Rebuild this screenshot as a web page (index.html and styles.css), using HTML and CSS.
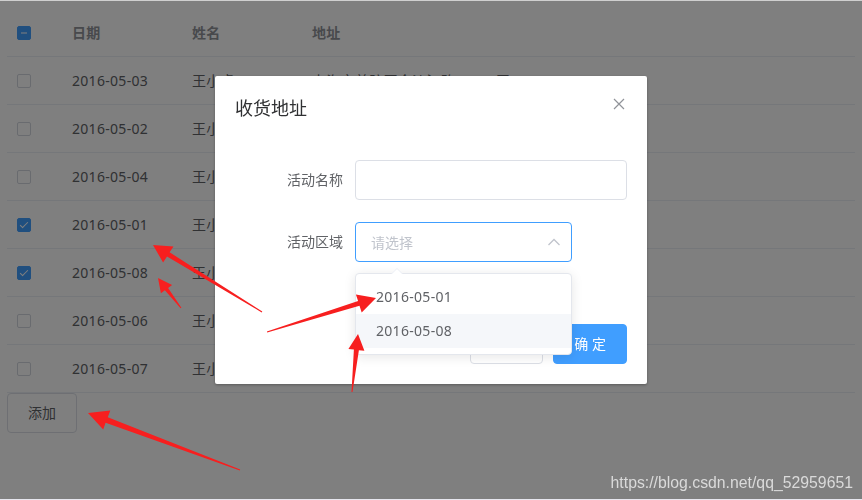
FILE: index.html
```html
<!DOCTYPE html>
<html lang="zh-CN">

<head>
  <meta charset="UTF-8">
  <meta name="viewport" content="width=device-width, initial-scale=1.0">
  <title>收货地址</title>
  <link rel="stylesheet" href="styles.css">
</head>

<body>
  <!-- 截图上下边缘 -->
  <div class="edge edge-top"></div>
  <div class="edge edge-bottom"></div>

  <div class="container">
    <!-- 表格 -->
    <div class="table">
      <div class="table-row table-head">
        <div class="cell cell-selection"><span class="checkbox indeterminate"></span></div>
        <div class="cell">日期</div>
        <div class="cell">姓名</div>
        <div class="cell">地址</div>
      </div>
      <div class="table-row">
        <div class="cell cell-selection"><span class="checkbox"></span></div>
        <div class="cell">2016-05-03</div>
        <div class="cell">王小虎</div>
        <div class="cell">上海市普陀区金沙江路 1518 弄</div>
      </div>
      <div class="table-row">
        <div class="cell cell-selection"><span class="checkbox"></span></div>
        <div class="cell">2016-05-02</div>
        <div class="cell">王小虎</div>
        <div class="cell">上海市普陀区金沙江路 1518 弄</div>
      </div>
      <div class="table-row">
        <div class="cell cell-selection"><span class="checkbox"></span></div>
        <div class="cell">2016-05-04</div>
        <div class="cell">王小虎</div>
        <div class="cell">上海市普陀区金沙江路 1518 弄</div>
      </div>
      <div class="table-row">
        <div class="cell cell-selection"><span class="checkbox checked"></span></div>
        <div class="cell">2016-05-01</div>
        <div class="cell">王小虎</div>
        <div class="cell">上海市普陀区金沙江路 1518 弄</div>
      </div>
      <div class="table-row">
        <div class="cell cell-selection"><span class="checkbox checked"></span></div>
        <div class="cell">2016-05-08</div>
        <div class="cell">王小虎</div>
        <div class="cell">上海市普陀区金沙江路 1518 弄</div>
      </div>
      <div class="table-row">
        <div class="cell cell-selection"><span class="checkbox"></span></div>
        <div class="cell">2016-05-06</div>
        <div class="cell">王小虎</div>
        <div class="cell">上海市普陀区金沙江路 1518 弄</div>
      </div>
      <div class="table-row">
        <div class="cell cell-selection"><span class="checkbox"></span></div>
        <div class="cell">2016-05-07</div>
        <div class="cell">王小虎</div>
        <div class="cell">上海市普陀区金沙江路 1518 弄</div>
      </div>
    </div>
    <!-- 添加按钮 -->
    <button class="btn">添加</button>
  </div>

  <!-- 遮罩 + 弹窗 -->
  <div class="dialog-wrapper">
    <div class="dialog">
      <div class="dialog-header">
        <span class="dialog-title">收货地址</span>
        <svg class="dialog-close" width="16" height="16" viewBox="0 0 16 16">
          <path d="M3 3L13 13M13 3L3 13" stroke="#909399" stroke-width="1.2" fill="none" />
        </svg>
      </div>

      <div class="dialog-body">
        <div class="form-item">
          <label class="form-label">活动名称</label>
          <div class="input"></div>
        </div>
        <div class="form-item">
          <label class="form-label">活动区域</label>
          <div class="select">
            <span class="placeholder">请选择</span>
            <svg class="select-arrow" width="14" height="14" viewBox="0 0 14 14">
              <polyline points="1.5,10 7,4.5 12.5,10" stroke="#C0C4CC" stroke-width="1.3" fill="none" />
            </svg>
            <!-- 下拉框 -->
            <div class="dropdown">
              <ul class="dropdown-list">
                <li class="dropdown-item">2016-05-01</li>
                <li class="dropdown-item hover">2016-05-08</li>
              </ul>
            </div>
          </div>
        </div>
      </div>

      <div class="dialog-footer">
        <button class="btn">取 消</button>
        <button class="btn btn-primary">确 定</button>
      </div>
    </div>
  </div>

  <!-- 截图标注箭头 -->
  <svg class="marks" width="862" height="500" viewBox="0 0 862 500">
    <g fill="#F71F1F">
      <polygon points="262.3,311.6 169.6,252.3 173.5,246.4 153,245 163.1,262.6 167,256.5 261.7,312.4" />
      <polygon points="181.4,307.7 168.1,287.9 172.1,284.9 158,278 160.9,293.3 164.9,290.3 180.6,308.3" />
      <polygon points="267.2,332.5 359.5,305.8 361.7,312.4 376,298 355.9,294.4 358.1,301 266.9,331.5" />
      <polygon points="352.5,392 358.9,350.2 364.4,350.7 358,334 348.4,349.1 353.9,349.6 351.5,392" />
      <polygon points="240.2,469.5 107.8,417.2 110.3,410.6 88,413 103.2,429.4 105.6,422.8 239.8,470.5" />
    </g>
  </svg>

  <!-- 水印 -->
  <div class="watermark">https://blog.csdn.net/qq_52959651</div>
</body>

</html>
```

FILE: styles.css
```css
/* 全局重置 */
* {
  margin: 0;
  padding: 0;
  box-sizing: border-box;
}

body {
  font-family: "Noto Sans", "Noto Sans CJK SC", sans-serif;
  font-size: 14px;
  color: #606266;
  background: #FFFFFF;
}

/* 截图边缘细线 */
.edge {
  position: fixed;
  left: 0;
  right: 0;
  height: 1px;
  z-index: 30;
}

.edge-top {
  top: 0;
  background: #CFCFCF;
}

.edge-bottom {
  bottom: 0;
  background: #E6E6EE;
}

.container {
  padding: 9px 7px 0;
}

/* 表格 */
.table-row {
  display: grid;
  grid-template-columns: 55px 120px 120px 1fr;
  align-items: center;
  height: 48px;
  border-bottom: 1px solid #EBEEF5;
}

.cell {
  padding-left: 10px;
  line-height: 23px;
  white-space: nowrap;
  letter-spacing: 0.3px;
}

.cell-selection {
  display: flex;
  align-items: center;
}

.table-head .cell {
  color: #909399;
  font-weight: bold;
}

/* 复选框 */
.checkbox {
  position: relative;
  width: 14px;
  height: 14px;
  border: 1px solid #D3D6DE;
  border-radius: 2px;
  background: #FFF;
}

.checkbox.checked,
.checkbox.indeterminate {
  background: #409EFF;
  border-color: #409EFF;
}

.checkbox.checked::after {
  content: "";
  position: absolute;
  left: 4px;
  top: 1px;
  width: 3px;
  height: 7px;
  border: 1px solid #FFF;
  border-left: 0;
  border-top: 0;
  transform: rotate(45deg);
}

.checkbox.indeterminate::before {
  content: "";
  position: absolute;
  left: 0;
  right: 0;
  top: 5px;
  height: 2px;
  background: #FFF;
  transform: scale(0.5);
}

/* 按钮 */
.btn {
  display: inline-block;
  padding: 12px 20px;
  border: 1px solid #DCDFE6;
  border-radius: 4px;
  background: #FFF;
  color: #606266;
  font-family: inherit;
  font-size: 14px;
  line-height: 14px;
}

.btn-primary {
  background: #409EFF;
  border-color: #409EFF;
  color: #FFF;
}

/* 遮罩层 */
.dialog-wrapper {
  position: fixed;
  top: 1px;
  left: 0;
  right: 0;
  bottom: 1px;
  background: rgba(0, 0, 0, 0.5);
  z-index: 10;
}

/* 弹窗 */
.dialog {
  position: relative;
  width: 432px;
  margin: 75px auto 0;
  background: #FFF;
  border-radius: 2px;
  box-shadow: 0 1px 3px rgba(0, 0, 0, 0.3);
}

.dialog-header {
  display: flex;
  justify-content: space-between;
  padding: 20px 20px 10px;
}

.dialog-title {
  font-size: 18px;
  line-height: 24px;
  color: #303133;
}

.dialog-body {
  padding: 30px 20px;
}

.form-item {
  display: flex;
  margin-bottom: 22px;
}

.form-label {
  width: 120px;
  padding-right: 12px;
  text-align: right;
  line-height: 40px;
}

.input {
  flex: 1;
  height: 40px;
  border: 1px solid #DCDFE6;
  border-radius: 4px;
}

/* 下拉选择 */
.select {
  position: relative;
  display: flex;
  align-items: center;
  justify-content: space-between;
  width: 217px;
  height: 40px;
  padding: 0 10px 0 15px;
  border: 1px solid #409EFF;
  border-radius: 4px;
}

.placeholder {
  color: #C0C4CC;
}

.dropdown {
  position: absolute;
  top: calc(100% + 12px);
  left: -1px;
  width: 217px;
  border: 1px solid #E4E7ED;
  border-radius: 4px;
  background: #FFF;
  box-shadow: 0 2px 12px rgba(0, 0, 0, 0.1);
  z-index: 5;
}

/* 下拉框小三角 */
.dropdown::before,
.dropdown::after {
  content: "";
  position: absolute;
  left: 35px;
  border: 6px solid transparent;
  border-top-width: 0;
}

.dropdown::before {
  top: -6px;
  border-bottom-color: #EBEEF5;
}

.dropdown::after {
  top: -5px;
  border-bottom-color: #FFF;
}

.dropdown-list {
  list-style: none;
  padding: 6px 0;
}

.dropdown-item {
  height: 34px;
  line-height: 34px;
  padding: 0 20px;
  color: #606266;
  letter-spacing: 0.3px;
}

.dropdown-item.hover {
  background: #F5F7FA;
}

/* 底部按钮 */
.dialog-footer {
  display: flex;
  justify-content: flex-end;
  gap: 10px;
  padding: 10px 20px 20px;
}

/* 标注箭头 */
.marks {
  position: fixed;
  top: 0;
  left: 0;
  z-index: 20;
}

/* 水印 */
.watermark {
  position: fixed;
  right: 9px;
  bottom: 8px;
  font-family: "Liberation Sans", Arial, sans-serif;
  font-size: 15.8px;
  line-height: 18px;
  color: #DADADA;
  z-index: 20;
}
```
